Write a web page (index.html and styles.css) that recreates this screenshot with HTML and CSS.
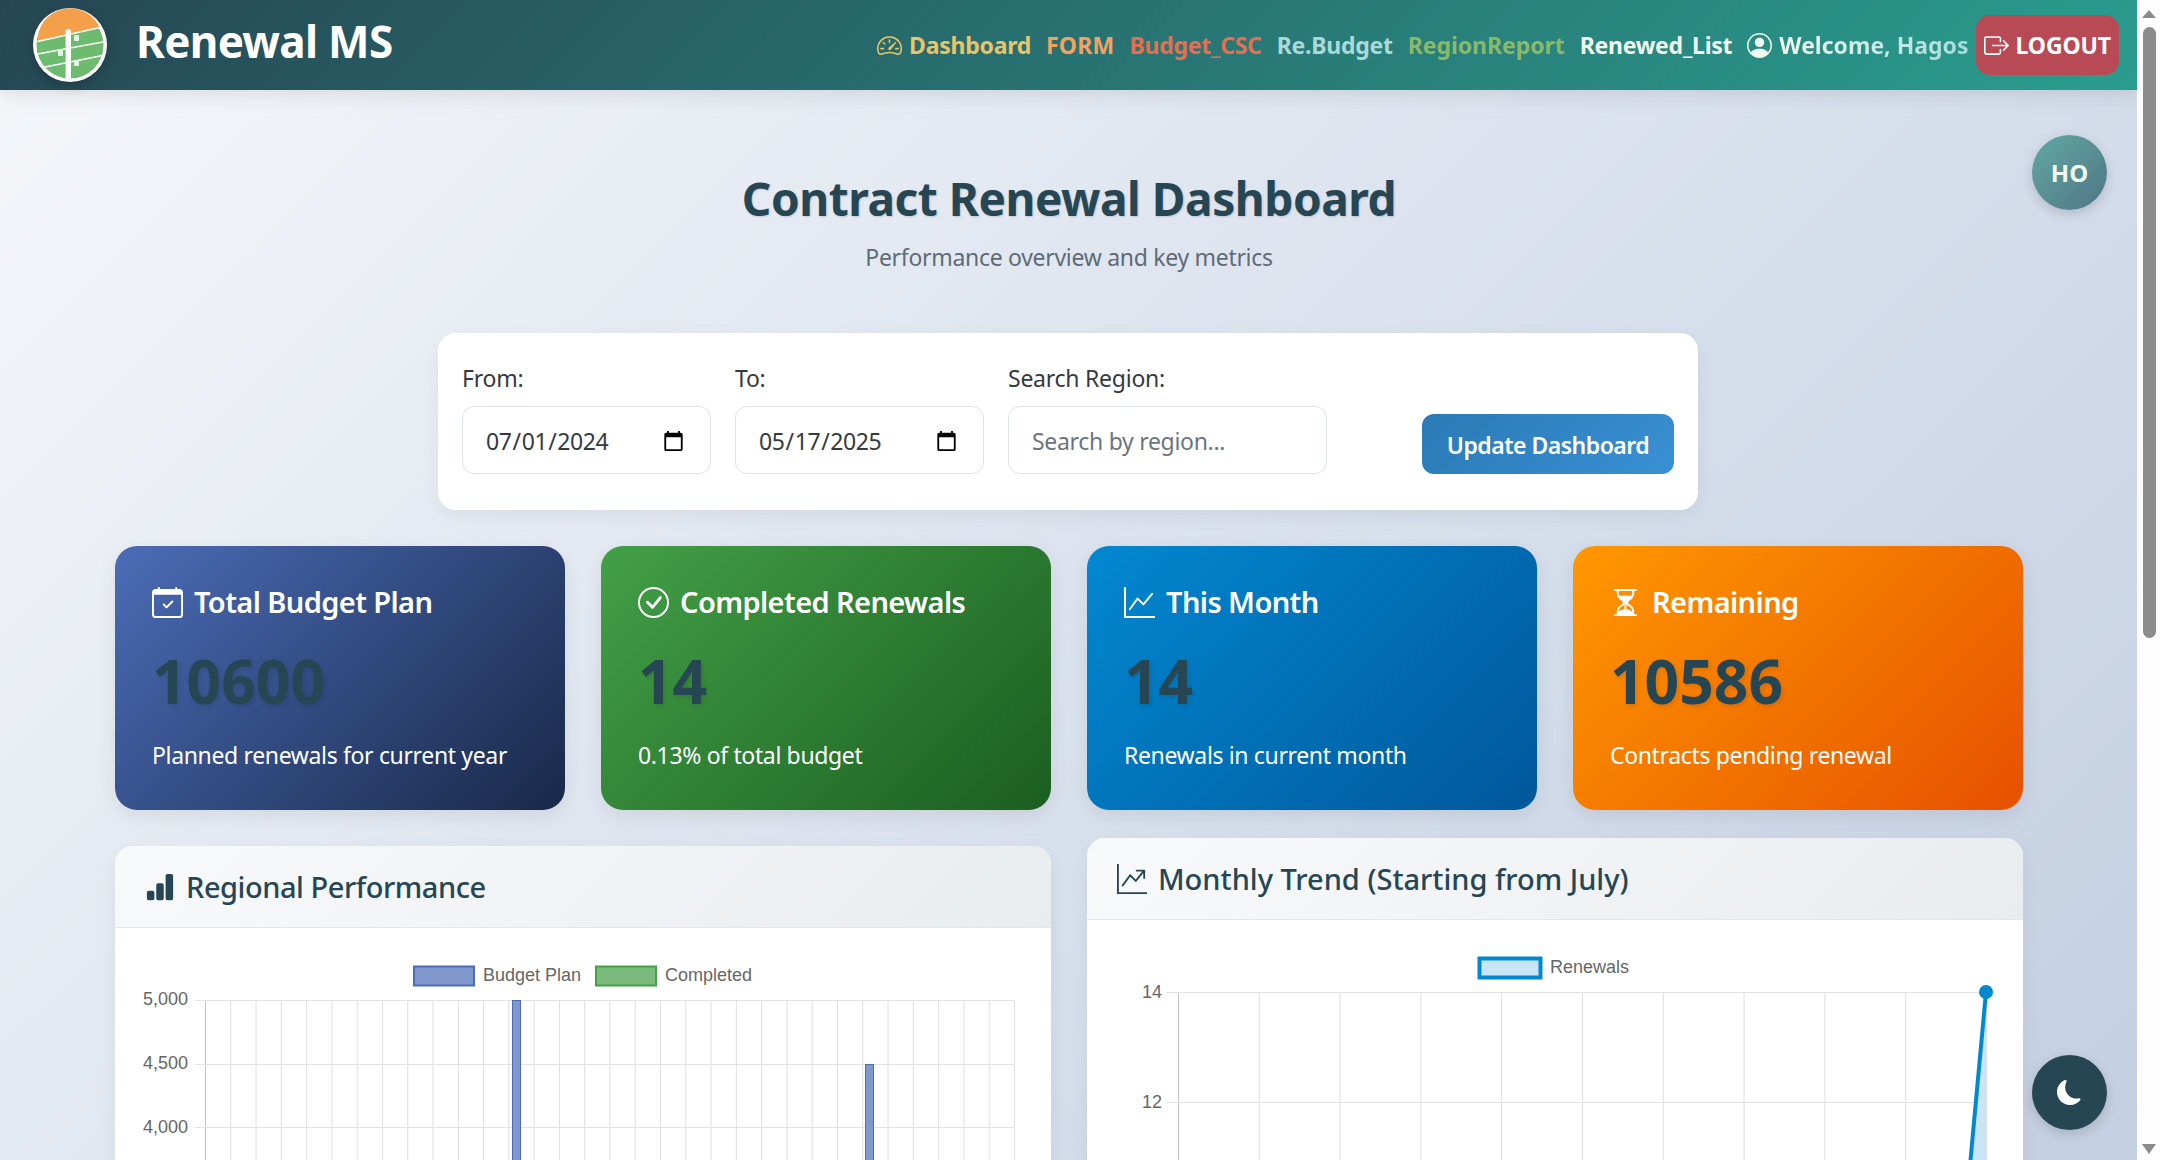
FILE: index.html
```html
<!DOCTYPE html>
<html lang="en">

<head>
    <meta charset="UTF-8">
    <meta name="viewport" content="width=device-width, initial-scale=1.0">
    <title>Renewal MS - Dashboard</title>
    <link rel="stylesheet" href="styles.css">
</head>

<body>
    <div class="page">
        <nav class="navbar">
            <a class="brand" href="#">
                <svg class="brand-logo" viewBox="0 0 74 74">
                    <circle cx="37" cy="37" r="37" fill="#fff" />
                    <circle cx="37" cy="37" r="33.5" fill="#6dbb6f" />
                    <path d="M5 33.5 L66.5 19.5 A32 31 0 0 0 5 33.5 Z" fill="#f4a04a" />
                    <path d="M4.5 33.5 L67 19.5 M4.5 46 L70 34 M9.5 59.5 L69.5 47.5" stroke="#fff" stroke-width="1.3" fill="none" />
                    <rect x="32.6" y="21" width="5.4" height="51" rx="2.7" fill="#fff" />
                    <rect x="41" y="27" width="5" height="6" rx="1" fill="#e6f3e6" />
                    <rect x="25" y="42" width="5" height="6" rx="1" fill="#e6f3e6" />
                    <rect x="41" y="52" width="5" height="6" rx="1" fill="#e6f3e6" />
                </svg>
                <span class="brand-name">Renewal MS</span>
            </a>
            <div class="nav-links">
                <a class="nav-link c-dash" href="#">
                    <svg class="nav-icon" viewBox="0 0 16 16" fill="currentColor">
                        <path d="M8 4a.5.5 0 0 1 .5.5V6a.5.5 0 0 1-1 0V4.5A.5.5 0 0 1 8 4zM3.732 5.732a.5.5 0 0 1 .707 0l.915.914a.5.5 0 1 1-.708.708l-.914-.915a.5.5 0 0 1 0-.707zM2 10a.5.5 0 0 1 .5-.5h1.586a.5.5 0 0 1 0 1H2.5A.5.5 0 0 1 2 10zm9.5 0a.5.5 0 0 1 .5-.5h1.5a.5.5 0 0 1 0 1H12a.5.5 0 0 1-.5-.5zm.754-4.246a.389.389 0 0 0-.527-.02L7.547 9.31a.91.91 0 1 0 1.302 1.258l3.434-4.297a.389.389 0 0 0-.029-.518z" />
                        <path d="M0 10a8 8 0 1 1 15.547 2.661c-.442 1.253-1.845 1.602-2.932 1.25C11.309 13.488 9.475 13 8 13c-1.474 0-3.31.488-4.615.911-1.087.352-2.49.003-2.932-1.25A7.988 7.988 0 0 1 0 10zm8-7a7 7 0 0 0-6.603 9.329c.203.575.923.876 1.68.63C4.397 12.533 6.358 12 8 12s3.604.532 4.923.96c.757.245 1.477-.056 1.68-.631A7 7 0 0 0 8 3z" />
                    </svg>
                    Dashboard
                </a>
                <a class="nav-link c-form" href="#">FORM</a>
                <a class="nav-link c-budget" href="#">Budget_CSC</a>
                <a class="nav-link c-rebudget" href="#">Re.Budget</a>
                <a class="nav-link c-region" href="#">RegionReport</a>
                <a class="nav-link c-list" href="#">Renewed_List</a>
                <span class="nav-link c-list">
                    <svg class="nav-icon" viewBox="0 0 16 16" fill="currentColor">
                        <path d="M11 6a3 3 0 1 1-6 0 3 3 0 0 1 6 0z" />
                        <path d="M0 8a8 8 0 1 1 16 0A8 8 0 0 1 0 8zm8-7a7 7 0 0 0-5.468 11.37C3.242 11.226 4.805 10 8 10s4.757 1.225 5.468 2.37A7 7 0 0 0 8 1z" />
                    </svg>
                    <span class="welcome">Welcome, Hagos</span>
                </span>
                <a class="logout" href="#">
                    <svg class="nav-icon" viewBox="0 0 16 16" fill="currentColor">
                        <path d="M10 12.5a.5.5 0 0 1-.5.5h-8a.5.5 0 0 1-.5-.5v-9a.5.5 0 0 1 .5-.5h8a.5.5 0 0 1 .5.5v2a.5.5 0 0 0 1 0v-2A1.5 1.5 0 0 0 9.5 2h-8A1.5 1.5 0 0 0 0 3.5v9A1.5 1.5 0 0 0 1.5 14h8a1.5 1.5 0 0 0 1.5-1.5v-2a.5.5 0 0 0-1 0v2z" />
                        <path d="M15.854 8.354a.5.5 0 0 0 0-.708l-3-3a.5.5 0 0 0-.708.708L14.293 7.5H5.5a.5.5 0 0 0 0 1h8.793l-2.147 2.146a.5.5 0 0 0 .708.708l3-3z" />
                    </svg>
                    LOGOUT
                </a>
            </div>
        </nav>

        <main class="content">
            <header class="page-head">
                <h1>Contract Renewal Dashboard</h1>
                <p>Performance overview and key metrics</p>
            </header>

            <form class="filter">
                <div class="field">
                    <label for="from">From:</label>
                    <input class="input date" type="date" id="from" value="2024-07-01">
                </div>
                <div class="field">
                    <label for="to">To:</label>
                    <input class="input date" type="date" id="to" value="2025-05-17">
                </div>
                <div class="field">
                    <label for="region">Search Region:</label>
                    <input class="input search" type="text" id="region" placeholder="Search by region...">
                </div>
                <button class="update" type="button">Update Dashboard</button>
            </form>

            <section class="stats">
                <div class="stat stat-navy">
                    <h3>
                        <svg class="stat-icon" viewBox="0 0 16 16" fill="currentColor">
                            <path d="M10.854 7.146a.5.5 0 0 1 0 .708l-3 3a.5.5 0 0 1-.708 0l-1.5-1.5a.5.5 0 1 1 .708-.708L7.5 9.793l2.646-2.647a.5.5 0 0 1 .708 0z" />
                            <path d="M3.5 0a.5.5 0 0 1 .5.5V1h8V.5a.5.5 0 0 1 1 0V1h1a2 2 0 0 1 2 2v11a2 2 0 0 1-2 2H2a2 2 0 0 1-2-2V3a2 2 0 0 1 2-2h1V.5a.5.5 0 0 1 .5-.5zM1 4v10a1 1 0 0 0 1 1h12a1 1 0 0 0 1-1V4H1z" />
                        </svg>
                        Total Budget Plan
                    </h3>
                    <div class="stat-value">10600</div>
                    <p>Planned renewals for current year</p>
                </div>
                <div class="stat stat-green">
                    <h3>
                        <svg class="stat-icon" viewBox="0 0 16 16" fill="currentColor">
                            <path d="M8 15A7 7 0 1 1 8 1a7 7 0 0 1 0 14zm0 1A8 8 0 1 0 8 0a8 8 0 0 0 0 16z" />
                            <path d="M10.97 4.97a.235.235 0 0 0-.02.022L7.477 9.417 5.384 7.323a.75.75 0 0 0-1.06 1.06L6.97 11.03a.75.75 0 0 0 1.079-.02l3.992-4.99a.75.75 0 0 0-1.071-1.05z" />
                        </svg>
                        Completed Renewals
                    </h3>
                    <div class="stat-value">14</div>
                    <p>0.13% of total budget</p>
                </div>
                <div class="stat stat-blue">
                    <h3>
                        <svg class="stat-icon" viewBox="0 0 16 16" fill="currentColor">
                            <path d="M0 0h1v15h15v1H0V0Zm14.817 3.113a.5.5 0 0 1 .07.704l-4.5 5.5a.5.5 0 0 1-.74.037L7.06 6.767l-3.656 5.027a.5.5 0 0 1-.808-.588l4-5.5a.5.5 0 0 1 .758-.06l2.609 2.61 4.15-5.073a.5.5 0 0 1 .704-.07Z" />
                        </svg>
                        This Month
                    </h3>
                    <div class="stat-value">14</div>
                    <p>Renewals in current month</p>
                </div>
                <div class="stat stat-orange">
                    <h3>
                        <svg class="stat-icon" viewBox="0 0 16 16" fill="currentColor">
                            <path d="M2.5 15a.5.5 0 1 1 0-1h1v-1a4.5 4.5 0 0 1 2.557-4.06c.29-.139.443-.377.443-.59v-.7c0-.213-.154-.451-.443-.59A4.5 4.5 0 0 1 3.5 3V2h-1a.5.5 0 0 1 0-1h11a.5.5 0 0 1 0 1h-1v1a4.5 4.5 0 0 1-2.557 4.06c-.29.139-.443.377-.443.59v.7c0 .213.154.451.443.59A4.5 4.5 0 0 1 12.5 13v1h1a.5.5 0 0 1 0 1h-11zm2-13v1c0 .537.12 1.045.337 1.5h6.326c.216-.455.337-.963.337-1.5V2h-7zm3 6.35c0 .701-.478 1.236-1.011 1.492A3.5 3.5 0 0 0 4.5 13s.866-1.299 3-1.48V8.35zm1 0v3.17c2.134.181 3 1.48 3 1.48a3.5 3.5 0 0 0-1.989-3.158C8.978 9.586 8.5 9.052 8.5 8.351z" />
                        </svg>
                        Remaining
                    </h3>
                    <div class="stat-value">10586</div>
                    <p>Contracts pending renewal</p>
                </div>
            </section>

            <section class="charts">
                <div class="chart-card">
                    <div class="chart-head">
                        <svg class="chart-icon" viewBox="0 0 16 16" fill="currentColor">
                            <path d="M1 11a1 1 0 0 1 1-1h2a1 1 0 0 1 1 1v3a1 1 0 0 1-1 1H2a1 1 0 0 1-1-1v-3zm5-4a1 1 0 0 1 1-1h2a1 1 0 0 1 1 1v7a1 1 0 0 1-1 1H7a1 1 0 0 1-1-1V7zm5-5a1 1 0 0 1 1-1h2a1 1 0 0 1 1 1v12a1 1 0 0 1-1 1h-2a1 1 0 0 1-1-1V2z" />
                        </svg>
                        <h4>Regional Performance</h4>
                    </div>
                    <svg class="chart-body" width="936" height="300">
                        <defs>
                            <pattern id="cols" x="90" y="0" width="25.28" height="300" patternUnits="userSpaceOnUse">
                                <line x1="0.5" y1="0" x2="0.5" y2="300" stroke="#dedede" />
                            </pattern>
                        </defs>
                        <rect x="90" y="72" width="810" height="228" fill="url(#cols)" />
                        <line x1="90.5" y1="72" x2="90.5" y2="300" stroke="#c4c4c4" />
                        <line x1="80" y1="72.5" x2="899" y2="72.5" stroke="#e2e2e2" />
                        <line x1="80" y1="136.5" x2="899" y2="136.5" stroke="#e2e2e2" />
                        <line x1="80" y1="199.5" x2="899" y2="199.5" stroke="#e2e2e2" />
                        <line x1="80" y1="263.5" x2="899" y2="263.5" stroke="#e2e2e2" />
                        <rect class="bar" x="397.5" y="72.5" width="8" height="240" />
                        <rect class="bar" x="750.5" y="136.5" width="8" height="180" />
                        <rect class="bar-swatch" x="299" y="38.5" width="60" height="19" />
                        <text class="tick" x="368" y="53">Budget Plan</text>
                        <rect class="done-swatch" x="481" y="38.5" width="60" height="19" />
                        <text class="tick" x="550" y="53">Completed</text>
                        <text class="tick" x="73" y="77" text-anchor="end">5,000</text>
                        <text class="tick" x="73" y="141" text-anchor="end">4,500</text>
                        <text class="tick" x="73" y="205" text-anchor="end">4,000</text>
                    </svg>
                </div>
                <div class="chart-card raised">
                    <div class="chart-head">
                        <svg class="chart-icon trend" viewBox="0 0 16 16" fill="currentColor">
                            <path d="M0 0h1v15h15v1H0V0Zm10 3.5a.5.5 0 0 1 .5-.5h4a.5.5 0 0 1 .5.5v4a.5.5 0 0 1-1 0V4.9l-3.613 4.417a.5.5 0 0 1-.74.037L7.06 6.767l-3.656 5.027a.5.5 0 0 1-.808-.588l4-5.5a.5.5 0 0 1 .758-.06l2.609 2.61L13.445 4H10.5a.5.5 0 0 1-.5-.5Z" />
                        </svg>
                        <h4 class="wide">Monthly Trend (Starting from July)</h4>
                    </div>
                    <svg class="chart-body" width="936" height="300">
                        <defs>
                            <pattern id="months" x="91" y="0" width="80.8" height="300" patternUnits="userSpaceOnUse">
                                <line x1="0.5" y1="0" x2="0.5" y2="300" stroke="#dedede" />
                            </pattern>
                        </defs>
                        <rect x="91" y="72" width="809" height="228" fill="url(#months)" />
                        <line x1="91.5" y1="72" x2="91.5" y2="300" stroke="#c4c4c4" />
                        <line x1="79" y1="72.5" x2="899" y2="72.5" stroke="#e2e2e2" />
                        <line x1="79" y1="182.5" x2="899" y2="182.5" stroke="#e2e2e2" />
                        <path d="M899 72 L828 842 L899 842 Z" fill="#c8e4f5" />
                        <line x1="899" y1="72" x2="828" y2="842" stroke="#0288d1" stroke-width="4" />
                        <circle cx="899" cy="72" r="7" fill="#0288d1" />
                        <rect x="392.5" y="38.5" width="61" height="19" fill="#c8e4f5" stroke="#0288d1" stroke-width="4" />
                        <text class="tick" x="463" y="53">Renewals</text>
                        <text class="tick" x="75" y="78" text-anchor="end">14</text>
                        <text class="tick" x="75" y="188" text-anchor="end">12</text>
                    </svg>
                </div>
            </section>
        </main>

        <div class="avatar">HO</div>
        <button class="theme" type="button">
            <svg viewBox="0 0 16 16" fill="currentColor">
                <path d="M6 .278a.768.768 0 0 1 .08.858 7.208 7.208 0 0 0-.878 3.46c0 4.021 3.278 7.277 7.318 7.277.527 0 1.04-.055 1.533-.16a.787.787 0 0 1 .81.316.733.733 0 0 1-.031.893A8.349 8.349 0 0 1 8.344 16C3.734 16 0 12.286 0 7.71 0 4.266 2.114 1.312 5.124.06A.752.752 0 0 1 6 .278z" />
            </svg>
        </button>
    </div>

    <div class="scrollbar">
        <div class="arrow-up"></div>
        <div class="thumb"></div>
        <div class="arrow-down"></div>
    </div>
</body>

</html>
```

FILE: styles.css
```css
* {
    box-sizing: border-box;
}

html,
body {
    height: 100%;
    margin: 0;
    overflow: hidden;
}

body {
    display: flex;
    font-family: "Noto Sans", "Open Sans", sans-serif;
    color: #212529;
    background: #fff;
}

a {
    text-decoration: none;
}

.page {
    position: relative;
    flex: 1;
    height: 100vh;
    overflow: hidden;
    background: linear-gradient(135deg, #f5f7fa 0%, #c3cfe2 100%);
}

/* navbar */
.navbar {
    display: flex;
    justify-content: space-between;
    align-items: center;
    height: 90px;
    padding: 0 18px 0 33px;
    background: linear-gradient(135deg, #264653, #2a9d8f);
    box-shadow: 0 4px 20px rgba(0, 0, 0, 0.1);
}

.brand {
    display: flex;
    align-items: center;
    gap: 29px;
    color: #fff;
    font-size: 44px;
    font-weight: 700;
    letter-spacing: -0.7px;
}

.brand-name {
    margin-bottom: 9px;
}

.brand-logo {
    width: 74px;
    height: 74px;
    filter: drop-shadow(0 4px 6px rgba(0, 0, 0, 0.2));
}

.nav-links {
    display: flex;
    align-items: center;
    gap: 15px;
}

.nav-link {
    display: flex;
    align-items: center;
    gap: 7px;
    font-size: 23px;
    font-weight: 700;
    letter-spacing: -0.25px;
    white-space: nowrap;
}

.nav-icon {
    width: 25px;
    height: 25px;
}

.c-dash {
    color: #e9c46a;
}

.c-form {
    color: #f4a261;
    letter-spacing: 0.2px;
}

.c-budget {
    color: #e76f51;
}

.c-rebudget {
    color: #a8dadc;
}

.c-region {
    color: #8ab96a;
    letter-spacing: -0.05px;
}

.c-list {
    color: #f1faee;
}

.welcome {
    background: linear-gradient(90deg, #f1faee, #a8dadc);
    -webkit-background-clip: text;
    background-clip: text;
    color: transparent;
    letter-spacing: 0;
}

.logout {
    display: flex;
    align-items: center;
    gap: 7px;
    height: 60px;
    margin-left: -8px;
    padding: 0 8px;
    border-radius: 14px;
    background: #b84a56;
    color: #fff;
    font-size: 23px;
    font-weight: 700;
    letter-spacing: -0.1px;
}

/* main */
.content {
    padding: 0 114px 0 115px;
}

.page-head {
    padding-top: 78px;
    text-align: center;
}

.page-head h1 {
    margin: 0;
    color: #264653;
    font-size: 46px;
    line-height: 60px;
    font-weight: 700;
    letter-spacing: -0.45px;
    text-shadow: 1px 1px 2px rgba(0, 0, 0, 0.15);
}

.page-head p {
    margin: 14px 0 0;
    color: #5f6b76;
    font-size: 23px;
    line-height: 30px;
    letter-spacing: -0.3px;
}

.filter {
    display: flex;
    align-items: flex-end;
    gap: 24px;
    width: 1260px;
    height: 177px;
    margin: 61px auto 0;
    padding: 24px 24px 36px;
    border-radius: 18px;
    background: #fff;
    box-shadow: 0 6px 20px rgba(0, 0, 0, 0.06);
    transform: translateX(-1px);
}

.field {
    display: flex;
    flex-direction: column;
    gap: 12px;
}

.field label {
    font-size: 23px;
    line-height: 32px;
    color: #343a40;
    letter-spacing: -0.25px;
}

.input {
    height: 68px;
    padding: 2px 23px 0 22px;
    border: 1px solid #dee2e6;
    border-radius: 12px;
    background: #fff;
    color: #343a40;
    font-family: inherit;
    font-size: 23px;
    letter-spacing: -0.4px;
}

.date {
    width: 249px;
}

.search {
    width: 319px;
    padding-left: 23px;
    letter-spacing: -0.3px;
}

.search::placeholder {
    color: #6c757d;
    opacity: 1;
}

.update {
    width: 252px;
    height: 60px;
    margin-left: auto;
    padding: 2px 0 0;
    border: 0;
    border-radius: 12px;
    background: linear-gradient(135deg, #2a7ab5, #3a90d4);
    color: #fff;
    font-family: inherit;
    font-size: 23px;
    font-weight: 600;
    letter-spacing: -0.5px;
}

/* stat cards */
.stats {
    display: grid;
    grid-template-columns: repeat(4, 450px);
    gap: 36px;
    margin-top: 36px;
}

.stat {
    height: 264px;
    padding: 36px 37px 0;
    border-radius: 22px;
    color: #fff;
    box-shadow: 0 6px 20px rgba(0, 0, 0, 0.08);
}

.stat h3 {
    display: flex;
    align-items: center;
    gap: 11px;
    margin: 0;
    font-size: 29px;
    line-height: 40px;
    font-weight: 600;
    letter-spacing: -0.6px;
}

.stat-icon {
    width: 31px;
    height: 31px;
    flex: none;
}

.stat-value {
    margin-top: 23px;
    color: #264653;
    font-size: 60.5px;
    line-height: 72px;
    font-weight: 700;
    text-shadow: 2px 2px 4px rgba(0, 0, 0, 0.1);
}

.stat p {
    margin: 22px 0 0;
    font-size: 23px;
    line-height: 32px;
    letter-spacing: -0.35px;
}

.stat-navy {
    background: linear-gradient(135deg, #4b6cb7, #182848);
}

.stat-green {
    background: linear-gradient(135deg, #43a047, #1b5e20);
}

.stat-blue {
    background: linear-gradient(135deg, #0288d1, #01579b);
}

.stat-orange {
    background: linear-gradient(135deg, #ff9800, #e65100);
}

/* charts */
.charts {
    display: grid;
    grid-template-columns: repeat(2, 936px);
    gap: 36px;
    margin-top: 36px;
}

.chart-card {
    overflow: hidden;
    border-radius: 18px;
    background: #fff;
    box-shadow: 0 6px 20px rgba(0, 0, 0, 0.06);
}

.raised {
    margin-top: -8px;
    margin-bottom: 8px;
}

.chart-head {
    display: flex;
    align-items: center;
    gap: 11px;
    height: 82px;
    padding: 0 30px;
    border-bottom: 1px solid #e4e7ea;
    background: linear-gradient(135deg, #f8f9fa, #e9ecef);
    color: #264653;
}

.chart-head h4 {
    margin: 0;
    font-size: 29px;
    font-weight: 500;
    letter-spacing: -0.45px;
}

.chart-head h4.wide {
    letter-spacing: 0;
}

.chart-icon {
    width: 30px;
    height: 30px;
}

.chart-body {
    display: block;
}

.tick {
    font-family: "Liberation Sans", Arial, sans-serif;
    font-size: 18px;
    fill: #666;
}

.bar {
    fill: #8098cd;
    stroke: #4b6cb7;
    stroke-width: 1;
}

.bar-swatch {
    fill: #8098cd;
    stroke: #4b6cb7;
    stroke-width: 2;
}

.done-swatch {
    fill: #7abb7d;
    stroke: #43a047;
    stroke-width: 2;
}

/* floating buttons */
.avatar,
.theme {
    position: absolute;
    right: 30px;
    width: 75px;
    height: 75px;
    border-radius: 50%;
    box-shadow: 0 4px 12px rgba(0, 0, 0, 0.15);
}

.avatar {
    top: 135px;
    display: flex;
    align-items: center;
    justify-content: center;
    background: linear-gradient(135deg, #62a8a3, #4f7686);
    color: #f1faee;
    font-size: 24px;
    font-weight: 700;
}

.theme {
    bottom: 30px;
    display: flex;
    align-items: center;
    justify-content: center;
    padding: 0;
    border: 0;
    background: #264653;
    color: #fff;
}

.theme svg {
    width: 25px;
    height: 25px;
}

/* drawn scrollbar, same size as the one in the capture */
.scrollbar {
    display: flex;
    flex: none;
    flex-direction: column;
    align-items: center;
    width: 23px;
    height: 100vh;
    padding: 10px 0 6px 1px;
    background: #fdfdfd;
}

.arrow-up,
.arrow-down {
    width: 0;
    height: 0;
    border-left: 7px solid transparent;
    border-right: 7px solid transparent;
}

.arrow-up {
    border-bottom: 8px solid #8c8c8c;
}

.arrow-down {
    margin-top: auto;
    border-top: 10px solid #8c8c8c;
}

.thumb {
    width: 13px;
    height: 611px;
    margin-top: 9px;
    border-radius: 7px;
    background: #8c8c8c;
}
```
